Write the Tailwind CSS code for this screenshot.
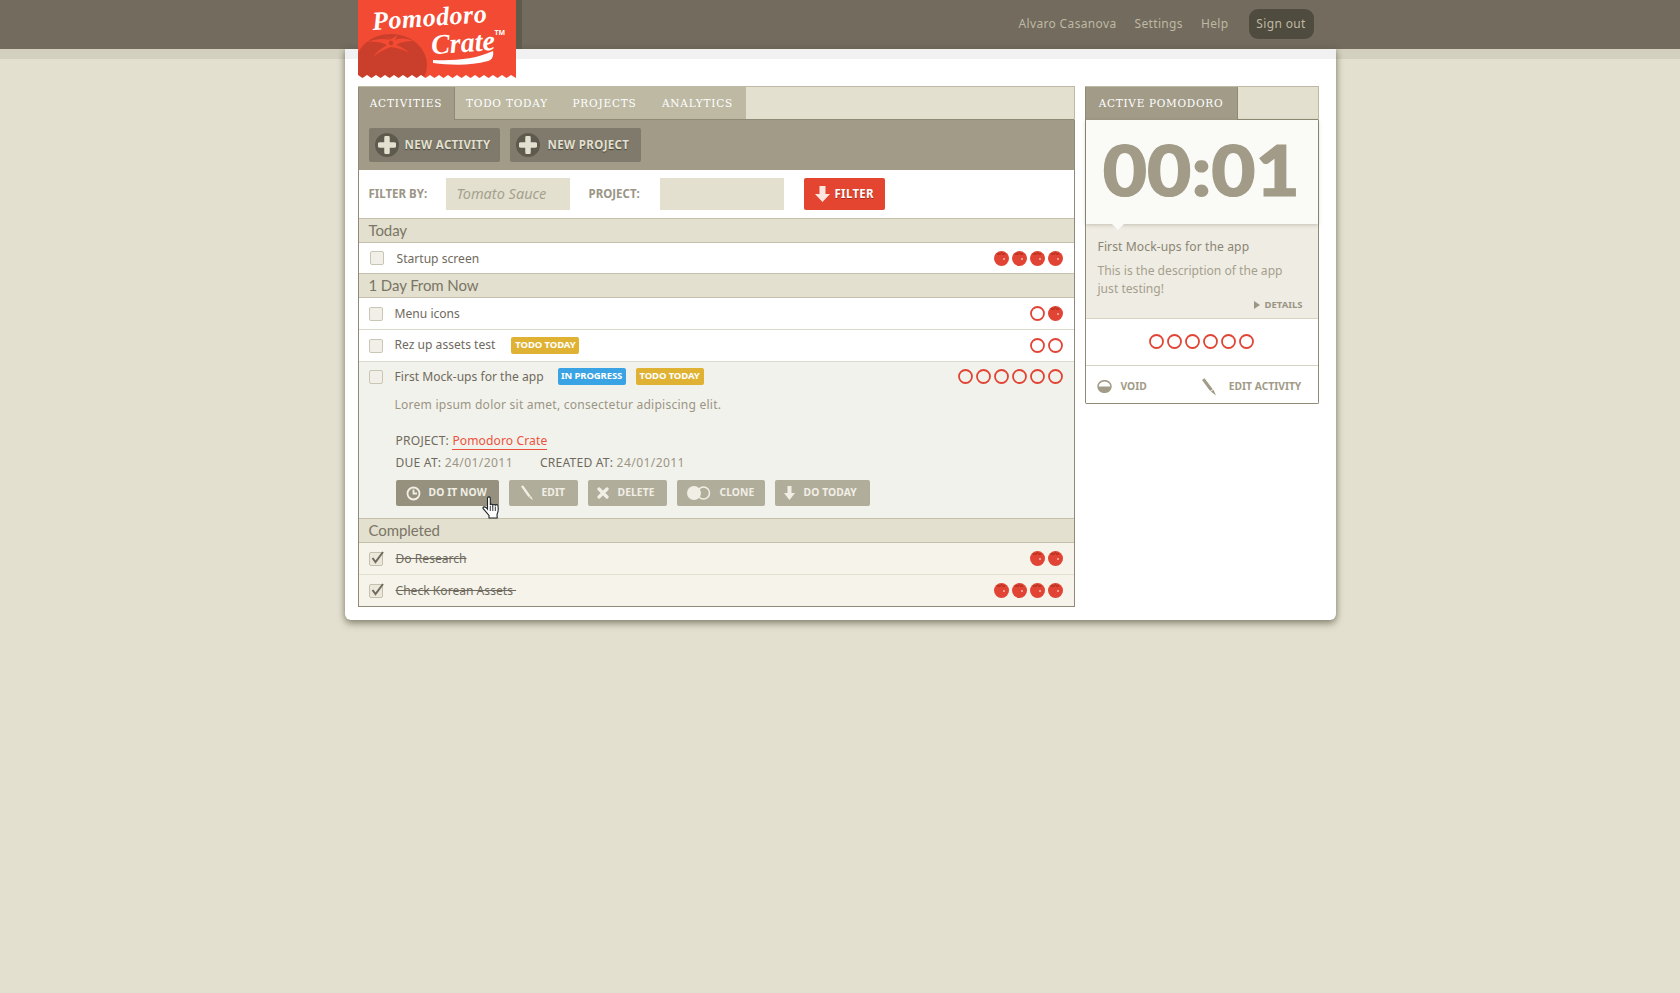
<!doctype html>
<html>
<head>
<meta charset="utf-8">
<script src="https://cdn.jsdelivr.net/npm/@tailwindcss/browser@4"></script>
</head>
<body class="bg-[#e3e0cf] font-['Noto_Sans',sans-serif] text-[12.1px] text-[#6f6a5d]">
<div class="relative min-h-[993px]">
  <div class="absolute left-0 right-0 top-[49px] h-[10px] bg-[#d3d0bf]"></div>
  <header class="relative h-[49px] bg-[#736b5e]">
    <div class="w-[991px] mx-auto h-full flex items-center justify-end pr-[22px] pb-[2px] gap-[18px] text-[12px] text-[#bdb9a3] tracking-[0.35px]">
      <a>Alvaro Casanova</a>
      <a>Settings</a>
      <a class="mr-[2px]">Help</a>
      <a class="w-[65px] h-[30px] rounded-[9px] bg-[#4f4b3e] flex items-center justify-center">Sign out</a>
    </div>
  </header>

  <main class="relative w-[991px] mx-auto bg-white rounded-b-[6px] shadow-[0_4px_7px_rgba(90,85,65,0.5),0_0_6px_rgba(90,85,65,0.4)]">
    <div class="absolute left-[171px] -top-[49px] w-[6px] h-[49px] bg-[#5f5b4b]"></div>
    <div class="absolute left-[13px] -top-[49px] w-[158px] h-[78px] overflow-hidden bg-[#f24a33] z-10">
      <svg class="absolute left-0 top-0" width="158" height="78" viewBox="0 0 158 78">
        <ellipse cx="33" cy="65" rx="36" ry="31" fill="#c93f2b"/>
        <path d="M33 40 C25 38 18 39 9 42 C18 41 24 42 29 45 C24 48 18 52 15 57 C21 52 27 49 33 47 C40 48 46 50 52 53 C47 49 42 46 38 45 C43 42 49 41 55 41 C48 38 42 38 37 40 L40 35 L33 39 L26 35 Z" fill="#f24a33"/>
        <circle cx="33" cy="43" r="2.200" fill="#c93f2b"/>
        <path d="M0 78 L0 75 L4.500 78 L9 75 L13.500 78 L18 75 L22.500 78 L27 75 L31.500 78 L36 75 L40.500 78 L45 75 L49.500 78 L54 75 L58.500 78 L63 75 L67.500 78 L72 75 L76.500 78 L81 75 L85.500 78 L90 75 L94.500 78 L99 75 L103.500 78 L108 75 L112.500 78 L117 75 L121.500 78 L126 75 L130.500 78 L135 75 L139.500 78 L144 75 L148.500 78 L153 75 L158 78 Z" fill="#fff"/>
        <path d="M75 60 C97 61 118 59 135 51 C136 56 134 60 130 61 C112 66 92 65 75 63Z" fill="#fff"/>
      </svg>
      <span class="absolute left-[14px] top-[6px] text-white font-['Liberation_Serif',serif] italic font-bold text-[26px] leading-[24px] -rotate-[4deg] whitespace-nowrap tracking-[0.5px]">Pomodoro</span>
      <span class="absolute left-[73px] top-[31px] text-white font-['Liberation_Serif',serif] italic font-bold text-[28px] leading-[24px] -rotate-[4deg] whitespace-nowrap">Crate</span>
      <span class="absolute left-[137px] top-[29px] text-white font-bold text-[7px] leading-[8px]">TM</span>
    </div>

    <div class="h-[10px] bg-[#f1f1f1]"></div>
    <div class="flex gap-[10px] pl-[13px] pr-[17px] pt-[27px] pb-[13px] items-start">

      <section class="w-[717px] border-x border-b border-[#8f8a75]">
        <nav class="h-[34px] flex -mx-px font-['DejaVu_Serif',serif] text-[10.5px] tracking-[0.8px] text-white bg-[#e3e0cf] border-t border-r border-[#bdb9a3]">
          <a class="w-[96px] bg-[#a19b87] flex items-center justify-center border-l border-[#8f8a75]">ACTIVITIES</a>
          <a class="w-[106px] bg-[#bdb9a3] flex items-center justify-center border-b border-l border-[#8f8a75] pt-[1px]">TODO TODAY</a>
          <a class="w-[90px] bg-[#bdb9a3] flex items-center justify-center border-b border-[#8f8a75] pt-[1px]">PROJECTS</a>
          <a class="w-[96px] bg-[#bdb9a3] flex items-center justify-center border-b border-[#8f8a75] pt-[1px]">ANALYTICS</a>
          <div class="flex-1 border-b border-[#8f8a75]"></div>
        </nav>
        <div class="h-[50px] bg-[#a19b87] flex items-center gap-[10px] pl-[10px] pb-[1px]">
          <a class="w-[131px] h-[34px] rounded-[2px] bg-[#7f7a6c] flex items-center gap-[6px] pl-[6px] text-[11.500px] font-bold text-[#e3e0cf] tracking-[0.35px] whitespace-nowrap [text-shadow:0_1px_1px_#45423a]">
            <span class="w-[24px] h-[24px] rounded-full bg-[#5e5b4e] flex items-center justify-center"><svg width="18" height="18" viewBox="0 0 18 18"><path d="M9 2v14M2 9h14" stroke="#e3e0cf" stroke-width="5.500" stroke-linecap="round"/></svg></span>
            <span class="pt-[1px]">NEW ACTIVITY</span>
          </a>
          <a class="w-[131px] h-[34px] rounded-[2px] bg-[#7f7a6c] flex items-center gap-[8px] pl-[6px] text-[11.500px] font-bold text-[#e3e0cf] tracking-[0.35px] whitespace-nowrap [text-shadow:0_1px_1px_#45423a]">
            <span class="w-[24px] h-[24px] rounded-full bg-[#5e5b4e] flex items-center justify-center"><svg width="18" height="18" viewBox="0 0 18 18"><path d="M9 2v14M2 9h14" stroke="#e3e0cf" stroke-width="5.500" stroke-linecap="round"/></svg></span>
            <span class="pt-[1px]">NEW PROJECT</span>
          </a>
        </div>
        <div class="h-[48px] flex items-center pl-[10px] font-bold text-[11.500px] text-[#9a9585]">
          <span class="w-[77px]">FILTER BY:</span>
          <div class="w-[124px] h-[32px] bg-[#e3e0cf] flex items-center pl-[11px] font-normal italic text-[14.500px] text-[#a5a08e]">Tomato Sauce</div>
          <span class="ml-[19px] w-[71px]">PROJECT:</span>
          <div class="w-[124px] h-[32px] bg-[#e3e0cf]"></div>
          <a class="ml-[20px] w-[81px] h-[32px] rounded-[2px] bg-[#e34530] flex items-center gap-[5px] pl-[11px] text-white text-[11.500px] tracking-[0.3px] [text-shadow:0_1px_0_#a32a1c]">
            <svg width="15" height="17" viewBox="0 0 15 17"><path d="M4.500 0h6v8h4.500L7.500 16 0 8h4.500z" fill="#fde6df"/></svg>FILTER
          </a>
        </div>

        <h3 class="h-[25px] bg-[#e3e0cf] border-y border-[#c4c0ac] pl-[10px] pb-[1px] flex items-center font-['Lato',sans-serif] text-[15px] tracking-[-0.1px] text-[#7a7566]">Today</h3>
        <div class="h-[30px] flex items-center pl-[11px] pr-[11px]">
          <span class="w-[14px] h-[14px] rounded-[2px] border border-[#c9c6b4] bg-[#f1efe8]"></span>
          <span class="ml-[13px] pt-[2px]">Startup screen</span>
          <div class="ml-auto flex gap-[3px]">
            <svg width="15" height="15" viewBox="0 0 15 15"><circle cx="7.500" cy="7.500" r="7.500" fill="#e14434"/><path d="M3 2l1 2 1-2 1 2 1.500-3 1.500 3 1-2 1 2" stroke="#b9321f" fill="none"/><circle cx="10" cy="8" r="1" fill="#f6b9ac"/></svg>
            <svg width="15" height="15" viewBox="0 0 15 15"><circle cx="7.500" cy="7.500" r="7.500" fill="#e14434"/><path d="M3 2l1 2 1-2 1 2 1.500-3 1.500 3 1-2 1 2" stroke="#b9321f" fill="none"/><circle cx="10" cy="8" r="1" fill="#f6b9ac"/></svg>
            <svg width="15" height="15" viewBox="0 0 15 15"><circle cx="7.500" cy="7.500" r="7.500" fill="#e14434"/><path d="M3 2l1 2 1-2 1 2 1.500-3 1.500 3 1-2 1 2" stroke="#b9321f" fill="none"/><circle cx="10" cy="8" r="1" fill="#f6b9ac"/></svg>
            <svg width="15" height="15" viewBox="0 0 15 15"><circle cx="7.500" cy="7.500" r="7.500" fill="#e14434"/><path d="M3 2l1 2 1-2 1 2 1.500-3 1.500 3 1-2 1 2" stroke="#b9321f" fill="none"/><circle cx="10" cy="8" r="1" fill="#f6b9ac"/></svg>
          </div>
        </div>

        <h3 class="h-[25px] bg-[#e3e0cf] border-y border-[#c4c0ac] pl-[10px] pb-[1px] flex items-center font-['Lato',sans-serif] text-[15px] tracking-[-0.1px] text-[#7a7566]">1 Day From Now</h3>
        <div class="h-[32px] flex items-center pl-[10px] pr-[11px] border-b border-[#dcdacb]">
          <span class="w-[14px] h-[14px] rounded-[2px] border border-[#c9c6b4] bg-[#f1efe8]"></span>
          <span class="ml-[12px] pt-[1px]">Menu icons</span>
          <div class="ml-auto flex gap-[3px]">
            <svg width="15" height="15" viewBox="0 0 15 15"><circle cx="7.500" cy="7.500" r="6.500" fill="none" stroke="#e14434" stroke-width="1.800"/></svg>
            <svg width="15" height="15" viewBox="0 0 15 15"><circle cx="7.500" cy="7.500" r="7.500" fill="#e14434"/><path d="M3 2l1 2 1-2 1 2 1.500-3 1.500 3 1-2 1 2" stroke="#b9321f" fill="none"/><circle cx="10" cy="8" r="1" fill="#f6b9ac"/></svg>
          </div>
        </div>
        <div class="h-[32px] flex items-center pl-[10px] pr-[11px] border-b border-[#dcdacb]">
          <span class="w-[14px] h-[14px] rounded-[2px] border border-[#c9c6b4] bg-[#f1efe8]"></span>
          <span class="ml-[12px]">Rez up assets test</span>
          <span class="ml-[16px] w-[68px] h-[17px] rounded-[2px] bg-[#e0b234] text-white font-bold text-[9.500px] tracking-[-0.1px] flex items-center justify-center">TODO TODAY</span>
          <div class="ml-auto flex gap-[3px]">
            <svg width="15" height="15" viewBox="0 0 15 15"><circle cx="7.500" cy="7.500" r="6.500" fill="none" stroke="#e14434" stroke-width="1.800"/></svg>
            <svg width="15" height="15" viewBox="0 0 15 15"><circle cx="7.500" cy="7.500" r="6.500" fill="none" stroke="#e14434" stroke-width="1.800"/></svg>
          </div>
        </div>
        <div class="h-[156px] bg-[#f2f2ec] pl-[10px] pr-[11px] pt-[6px]">
          <div class="h-[17px] flex items-center">
            <span class="w-[14px] h-[14px] rounded-[2px] border border-[#c9c6b4] bg-[#f1efe8]"></span>
            <span class="ml-[12px] pt-[1px]">First Mock-ups for the app</span>
            <span class="ml-[14px] w-[68px] h-[17px] rounded-[2px] bg-[#3aa3e3] text-white font-bold text-[9.500px] tracking-[-0.1px] flex items-center justify-center">IN PROGRESS</span>
            <span class="ml-[10px] w-[68px] h-[17px] rounded-[2px] bg-[#e0b234] text-white font-bold text-[9.500px] tracking-[-0.1px] flex items-center justify-center">TODO TODAY</span>
            <div class="ml-auto flex gap-[3px]">
              <svg width="15" height="15" viewBox="0 0 15 15"><circle cx="7.500" cy="7.500" r="6.500" fill="none" stroke="#e14434" stroke-width="1.800"/></svg>
              <svg width="15" height="15" viewBox="0 0 15 15"><circle cx="7.500" cy="7.500" r="6.500" fill="none" stroke="#e14434" stroke-width="1.800"/></svg>
              <svg width="15" height="15" viewBox="0 0 15 15"><circle cx="7.500" cy="7.500" r="6.500" fill="none" stroke="#e14434" stroke-width="1.800"/></svg>
              <svg width="15" height="15" viewBox="0 0 15 15"><circle cx="7.500" cy="7.500" r="6.500" fill="none" stroke="#e14434" stroke-width="1.800"/></svg>
              <svg width="15" height="15" viewBox="0 0 15 15"><circle cx="7.500" cy="7.500" r="6.500" fill="none" stroke="#e14434" stroke-width="1.800"/></svg>
              <svg width="15" height="15" viewBox="0 0 15 15"><circle cx="7.500" cy="7.500" r="6.500" fill="none" stroke="#e14434" stroke-width="1.800"/></svg>
            </div>
          </div>
          <p class="ml-[26px] mt-[11px] leading-[18px] text-[#9a9585] tracking-[0.21px]">Lorem ipsum dolor sit amet, consectetur adipiscing elit.</p>
          <p class="ml-[27px] mt-[18px] leading-[18px] tracking-[0.2px]">PROJECT: <a class="text-[#ea5240] border-b border-[#ea5240] tracking-[0.1px]">Pomodoro Crate</a></p>
          <p class="ml-[27px] mt-[4px] leading-[18px] tracking-[0.2px]">DUE AT: <span class="text-[#9a9585] tracking-[0.4px]">24/01/2011</span><span class="ml-[27px]">CREATED AT:</span> <span class="text-[#9a9585] tracking-[0.4px]">24/01/2011</span></p>
          <div class="ml-[27px] mt-[8px] flex text-[10.300px] font-bold text-[#f1efe5] tracking-[0.1px]">
            <a class="relative w-[103px] h-[26px] rounded-[2px] bg-[#96917f] flex items-center gap-[8px] pl-[10px]">
              <svg width="15" height="15" viewBox="0 0 15 15" fill="none" stroke="#f1efe5" stroke-width="1.800"><circle cx="7.500" cy="7.500" r="6"/><path d="M7.500 3.500v4h3.500"/></svg>DO IT NOW
              <svg class="absolute left-[86px] top-[16px] z-10" width="18" height="23" viewBox="0 0 18 23"><path d="M5.500 13V2.300a1.400 1.400 0 0 1 2.800 0V9a1.300 1.300 0 0 1 2.500.3 1.300 1.300 0 0 1 2.500.4 1.300 1.300 0 0 1 2.700.7c.6 3.200.4 5-1 8l.2 3.600H7v-2.500L1.200 12.700C.200 11 3 9.500 5.500 13z" fill="#fff" stroke="#1d2326" stroke-width="1.100"/><path d="M8.300 10v5M10.800 10v5M13.300 10.500v4.500" stroke="#1d2326" stroke-width=".9"/></svg>
            </a>
            <a class="ml-[10px] w-[69px] h-[26px] rounded-[2px] bg-[#b1ad9b] flex items-center gap-[7px] pl-[11px]">
              <svg width="15" height="16" viewBox="0 0 15 16"><path d="M1 1.500l2-1.300 7.500 10.500-2.100 1.400z M9 12.300l2-1.400 2 4.300z" fill="#f1efe5"/></svg>EDIT
            </a>
            <a class="ml-[10px] w-[79px] h-[26px] rounded-[2px] bg-[#b1ad9b] flex items-center gap-[9px] pl-[9px]">
              <svg width="12" height="12" viewBox="0 0 12 12"><path d="M2 2l8 8M10 2l-8 8" stroke="#f1efe5" stroke-width="3.200" stroke-linecap="round"/></svg>DELETE
            </a>
            <a class="ml-[10px] w-[88px] h-[26px] rounded-[2px] bg-[#b1ad9b] flex items-center gap-[9px] pl-[10px]">
              <svg width="24" height="14" viewBox="0 0 24 14"><circle cx="7" cy="7" r="7" fill="#f1efe5"/><circle cx="16.500" cy="7" r="6" fill="none" stroke="#f1efe5" stroke-width="1.500"/></svg>CLONE
            </a>
            <a class="ml-[10px] w-[95px] h-[26px] rounded-[2px] bg-[#b1ad9b] flex items-center gap-[9px] pl-[9px]">
              <svg width="11" height="14" viewBox="0 0 11 14"><path d="M3.500 0h4v7H11l-5.500 7L0 7h3.500z" fill="#f1efe5"/></svg>DO TODAY
            </a>
          </div>
        </div>

        <h3 class="h-[25px] bg-[#e3e0cf] border-y border-[#c4c0ac] pl-[10px] pb-[1px] flex items-center font-['Lato',sans-serif] text-[15px] tracking-[-0.1px] text-[#7a7566]">Completed</h3>
        <div class="h-[32px] bg-[#f5f3ea] flex items-center pl-[10px] pr-[11px] border-b border-[#e3e0cf]">
          <svg width="17" height="15" viewBox="0 0 17 15"><rect x=".5" y="1.500" width="13" height="13" rx="1.500" fill="#ebe8db" stroke="#c4c0ac"/><path d="M3.500 7l3 4 L14 1" fill="none" stroke="#6f6a5d" stroke-width="2"/></svg>
          <span class="ml-[10px] pt-[1px] line-through">Do Research</span>
          <div class="ml-auto flex gap-[3px]">
            <svg width="15" height="15" viewBox="0 0 15 15"><circle cx="7.500" cy="7.500" r="7.500" fill="#e14434"/><path d="M3 2l1 2 1-2 1 2 1.500-3 1.500 3 1-2 1 2" stroke="#b9321f" fill="none"/><circle cx="10" cy="8" r="1" fill="#f6b9ac"/></svg>
            <svg width="15" height="15" viewBox="0 0 15 15"><circle cx="7.500" cy="7.500" r="7.500" fill="#e14434"/><path d="M3 2l1 2 1-2 1 2 1.500-3 1.500 3 1-2 1 2" stroke="#b9321f" fill="none"/><circle cx="10" cy="8" r="1" fill="#f6b9ac"/></svg>
          </div>
        </div>
        <div class="h-[31px] bg-[#f5f3ea] flex items-center pl-[10px] pr-[11px]">
          <svg width="17" height="15" viewBox="0 0 17 15"><rect x=".5" y="1.500" width="13" height="13" rx="1.500" fill="#ebe8db" stroke="#c4c0ac"/><path d="M3.500 7l3 4 L14 1" fill="none" stroke="#6f6a5d" stroke-width="2"/></svg>
          <span class="ml-[10px] pt-[1px] line-through">Check Korean Assets&nbsp;</span>
          <div class="ml-auto flex gap-[3px]">
            <svg width="15" height="15" viewBox="0 0 15 15"><circle cx="7.500" cy="7.500" r="7.500" fill="#e14434"/><path d="M3 2l1 2 1-2 1 2 1.500-3 1.500 3 1-2 1 2" stroke="#b9321f" fill="none"/><circle cx="10" cy="8" r="1" fill="#f6b9ac"/></svg>
            <svg width="15" height="15" viewBox="0 0 15 15"><circle cx="7.500" cy="7.500" r="7.500" fill="#e14434"/><path d="M3 2l1 2 1-2 1 2 1.500-3 1.500 3 1-2 1 2" stroke="#b9321f" fill="none"/><circle cx="10" cy="8" r="1" fill="#f6b9ac"/></svg>
            <svg width="15" height="15" viewBox="0 0 15 15"><circle cx="7.500" cy="7.500" r="7.500" fill="#e14434"/><path d="M3 2l1 2 1-2 1 2 1.500-3 1.500 3 1-2 1 2" stroke="#b9321f" fill="none"/><circle cx="10" cy="8" r="1" fill="#f6b9ac"/></svg>
            <svg width="15" height="15" viewBox="0 0 15 15"><circle cx="7.500" cy="7.500" r="7.500" fill="#e14434"/><path d="M3 2l1 2 1-2 1 2 1.500-3 1.500 3 1-2 1 2" stroke="#b9321f" fill="none"/><circle cx="10" cy="8" r="1" fill="#f6b9ac"/></svg>
          </div>
        </div>
      </section>

      <aside class="w-[234px] border-x border-b border-[#8f8a75] rounded-b-[2px]">
        <div class="h-[34px] -mx-px flex bg-[#e3e0cf] border-t border-r border-[#bdb9a3] font-['DejaVu_Serif',serif] text-[10.5px] tracking-[0.7px] text-white">
          <a class="w-[152px] bg-[#a19b87] flex items-center justify-center border-l border-[#8f8a75]">ACTIVE POMODORO</a>
          <div class="flex-1 border-b border-l border-[#8f8a75]"></div>
        </div>
        <div class="relative h-[104px] bg-[#fafaf7] shadow-[0_1px_4px_rgba(90,85,65,0.3)] flex items-center justify-center pb-[7px] font-['Lato',sans-serif] font-black text-[70px] text-[#a19b87] leading-none">
          <span class="scale-x-[1.09] [-webkit-text-stroke:1.2px_#a19b87]">00:01</span>
          <span class="absolute left-[26px] -bottom-[6px] w-0 h-0 border-x-[6px] border-x-transparent border-t-[6px] border-t-[#fafaf7]"></span>
        </div>
        <div class="h-[95px] bg-[#efece3] border-b border-[#d6d3c2] px-[12px] pt-[14px] text-[#8a8574]">
          <p class="leading-[18px] tracking-[0.1px]">First Mock-ups for the app</p>
          <p class="mt-[6px] leading-[18px] text-[#a5a08e]">This is the description of the app<br>just testing!</p>
          <p class="flex items-center justify-end pr-[3px] gap-[5px] text-[9.500px] font-bold text-[#9a9585] leading-[14px]"><span class="w-0 h-0 border-y-[4px] border-y-transparent border-l-[6px] border-l-[#9a9585]"></span>DETAILS</p>
        </div>
        <div class="h-[47px] border-b border-[#d6d3c2] pb-[1px] flex items-center justify-center gap-[3px]">
          <svg width="15" height="15" viewBox="0 0 15 15"><circle cx="7.500" cy="7.500" r="6.500" fill="none" stroke="#e14434" stroke-width="1.800"/></svg>
          <svg width="15" height="15" viewBox="0 0 15 15"><circle cx="7.500" cy="7.500" r="6.500" fill="none" stroke="#e14434" stroke-width="1.800"/></svg>
          <svg width="15" height="15" viewBox="0 0 15 15"><circle cx="7.500" cy="7.500" r="6.500" fill="none" stroke="#e14434" stroke-width="1.800"/></svg>
          <svg width="15" height="15" viewBox="0 0 15 15"><circle cx="7.500" cy="7.500" r="6.500" fill="none" stroke="#e14434" stroke-width="1.800"/></svg>
          <svg width="15" height="15" viewBox="0 0 15 15"><circle cx="7.500" cy="7.500" r="6.500" fill="none" stroke="#e14434" stroke-width="1.800"/></svg>
          <svg width="15" height="15" viewBox="0 0 15 15"><circle cx="7.500" cy="7.500" r="6.500" fill="none" stroke="#e14434" stroke-width="1.800"/></svg>
        </div>
        <div class="h-[37px] flex items-center pl-[11px] pt-[4px] text-[10.300px] font-bold text-[#a19b87]">
          <svg width="15" height="13" viewBox="0 0 15 13"><ellipse cx="7.500" cy="6.500" rx="6.500" ry="5.800" fill="none" stroke="#a19b87" stroke-width="1.500"/><path d="M1 6.500h13a6.500 5.800 0 0 1-13 0z" fill="#a19b87"/></svg>
          <span class="ml-[9px]">VOID</span>
          <svg class="ml-[55px]" width="15" height="18" viewBox="0 0 15 18"><path d="M0 2l2.500-1.800 8.300 11-2.700 1.800z M8.800 13.500l2.700-1.800 2.500 5.800z" fill="#a19b87"/></svg>
          <span class="ml-[12px]">EDIT ACTIVITY</span>
        </div>
      </aside>
    </div>
  </main>
</div>
</body>
</html>
